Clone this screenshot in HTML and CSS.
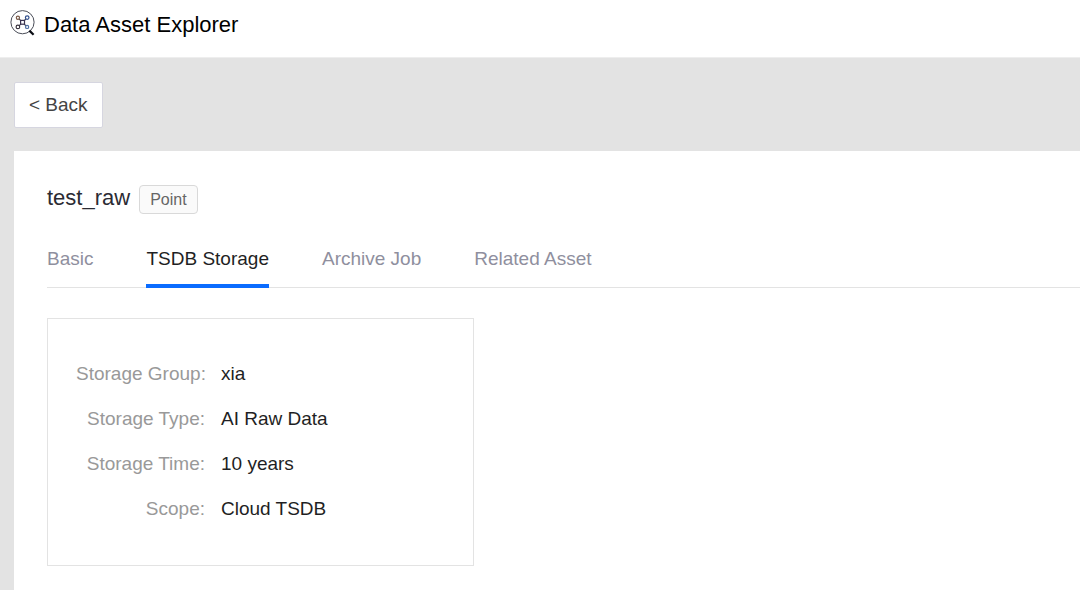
FILE: index.html
```html
<!DOCTYPE html>
<html lang="en">
<head>
<meta charset="utf-8">
<meta name="viewport" content="width=device-width, initial-scale=1">
<title>Data Asset Explorer</title>
<link rel="stylesheet" href="styles.css">
</head>
<body>
<header class="app-header">
  <svg class="app-logo" viewBox="0 0 26 26" fill="none" aria-hidden="true">
    <circle cx="12.5" cy="12.2" r="11.6" stroke="#4a4d58"/>
    <path d="M19.4 20.6L23.6 24.8" stroke="#0b0d14" stroke-width="2.2"/>
    <path d="M9 8.8L11 10.8M16 8.8L14 10.8M9 15.8L11 13.8M14 13.8L16 15.8" stroke="#3f4350" stroke-width="1.2"/>
    <rect x="10.6" y="10.4" width="3.9" height="3.8" stroke="#3b3350" stroke-width="1.2"/>
    <circle cx="7.9" cy="7.7" r="1.6" stroke="#7a5a48" stroke-width="1.2"/>
    <circle cx="17.2" cy="7.6" r="1.8" stroke="#2f4d8c" stroke-width="1.2"/>
    <circle cx="7.9" cy="16.9" r="1.8" stroke="#3a3540" stroke-width="1.2"/>
    <circle cx="17.1" cy="16.9" r="1.6" stroke="#4f6ea0" stroke-width="1.2"/>
  </svg>
  <h1 class="app-title">Data Asset Explorer</h1>
</header>
<main class="page">
  <button class="back-button" type="button">&lt; Back</button>
  <section class="panel">
    <div class="panel-heading">
      <h2 class="asset-name">test_raw</h2>
      <span class="tag">Point</span>
    </div>
    <nav class="tabs">
      <a class="tab" href="#basic">Basic</a>
      <a class="tab tab-active" href="#storage" aria-current="page">TSDB Storage</a>
      <a class="tab" href="#archive">Archive Job</a>
      <a class="tab" href="#related">Related Asset</a>
    </nav>
    <dl class="details" id="storage">
      <dt class="label">Storage Group:</dt><dd class="value">xia</dd>
      <dt class="label">Storage Type:</dt><dd class="value">AI Raw Data</dd>
      <dt class="label">Storage Time:</dt><dd class="value">10 years</dd>
      <dt class="label">Scope:</dt><dd class="value">Cloud TSDB</dd>
    </dl>
  </section>
</main>
</body>
</html>
```

FILE: styles.css
```css
* {
  box-sizing: border-box;
}

body {
  display: flex;
  flex-direction: column;
  min-height: 100vh;
  margin: 0;
  background: #e3e3e3;
  color: #1f1f24;
  font-family: "Liberation Sans", Arial, sans-serif;
  font-size: 19px;
  line-height: 22px;
}

.app-header {
  display: flex;
  align-items: flex-start;
  gap: 8px;
  padding: 10px 10px 17px;
  border-bottom: 1px solid #eeeeee;
  background: #ffffff;
}

.app-logo {
  width: 26px;
  height: 26px;
}

.app-title,
.asset-name {
  margin: 0;
  font-size: 22px;
  font-weight: 400;
}

.app-title {
  color: #000000;
  line-height: 30px;
}

.page {
  display: flex;
  flex: 1;
  flex-direction: column;
  align-items: flex-start;
  gap: 23px;
  padding: 24px 0 0 14px;
}

.back-button {
  padding: 11px 14px;
  border: 1px solid #d6d6e0;
  border-radius: 2px;
  background: #ffffff;
  color: #444444;
  font: inherit;
}

.panel {
  flex: 1;
  align-self: stretch;
  padding: 33px 0 24px 33px;
  background: #ffffff;
}

.panel-heading {
  display: flex;
  align-items: flex-end;
  gap: 9px;
}

.asset-name {
  padding-bottom: 2px;
  color: #2b2b33;
  line-height: 28px;
}

.tag {
  padding: 3px 10px;
  border: 1px solid #d9d9d9;
  border-radius: 4px;
  background: #fafafa;
  color: #666666;
  font-size: 16px;
  line-height: 21px;
}

.tabs {
  display: flex;
  gap: 53px;
  margin-top: 34px;
  border-bottom: 1px solid #e3e3e3;
}

.tab {
  margin-bottom: -1px;
  padding-bottom: 14px;
  border-bottom: 4px solid transparent;
  color: #8f8f9e;
  text-decoration: none;
}

.tab-active {
  border-color: #0a6cff;
  color: #1f1f24;
}

.details {
  display: grid;
  grid-template-columns: 129px 1fr;
  gap: 23px 16px;
  max-width: 427px;
  margin: 30px 0 0;
  padding: 44px 28px 45px;
  border: 1px solid #e3e3e3;
}

.label {
  color: #999999;
  text-align: right;
  white-space: nowrap;
}

.value {
  margin: 0;
}
```
